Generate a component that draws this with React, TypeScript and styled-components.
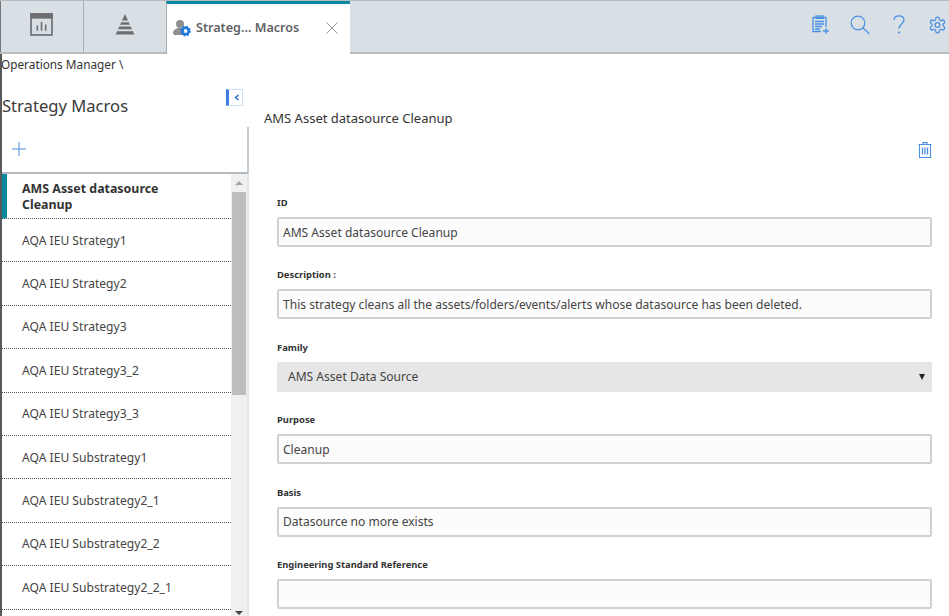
import React from "react";
import styled, { createGlobalStyle } from "styled-components";

const Global = createGlobalStyle`
  html, body { margin: 0; padding: 0; background: #fff; }
  body { font-family: "Noto Sans", "Open Sans", sans-serif; color: #333; }
  * { box-sizing: border-box; }
`;

const Page = styled.div`
  width: 949px; height: 616px; overflow: hidden; display: flex; flex-direction: column;
  background: #fff;
`;
const TabBar = styled.div`
  height: 54px; flex: none; display: flex; align-items: stretch;
  background: #d9e0e5; border-top: 1px solid #b9bcbe; border-bottom: 2px solid #b9bcbe;
`;
const IconTab = styled.div`
  width: 83px; display: flex; align-items: center; justify-content: center; padding-bottom: 3px;
  border-left: 1px solid #a9adb0;
  &:first-child { border-left: 1px solid #777; padding: 0 2px 5px 0; }
`;
const ActiveTab = styled.div`
  width: 184px; margin-bottom: -2px; display: flex; align-items: center;
  background: #fff; border-top: 3px solid #0b87a0; border-left: 1px solid #a9adb0;
  padding: 0 12px 3px 5px;
`;
const TabTitle = styled.span`
  font-size: 12.6px; font-weight: 600; color: #5f6264; margin-left: 4px; flex: 1; white-space: nowrap;
`;
const TabTools = styled.div`
  margin-left: auto; display: flex; align-items: center; gap: 23px; padding: 0 2px 3px 0;
  & > svg:first-child { margin-right: -3px; }
`;
const Crumb = styled.div`
  height: 22px; font-size: 11.8px; line-height: 21px; padding-left: 1px; color: #333; flex: none;
`;
const Body = styled.div`
  flex: 1; display: flex; min-height: 0; border-left: 2px solid #58595b; margin-top: -22px; padding-top: 22px;
`;
const Sidebar = styled.aside`
  width: 247px; flex: none; display: flex; flex-direction: column;
`;
const SideHead = styled.div`
  height: 51px; flex: none; display: flex; justify-content: space-between; padding: 13px 6px 0 0;
`;
const SideTitle = styled.h2`
  margin: 6px 0 0; font-size: 16.6px; font-weight: 400; line-height: 22px; color: #3a3a3a;
`;
const Collapse = styled.button`
  width: 17px; height: 17px; padding: 0 0 0 3px; background: #fff; display: flex; align-items: center; justify-content: center;
  border: 1px solid #cfe0f5; border-left: 3px solid #3d7fe0;
`;
const AddBar = styled.div`
  height: 47px; flex: none; display: flex; align-items: center; padding: 0 0 2px 10px;
  border-right: 2px solid #c5ced6; border-bottom: 2px solid #b4bac0;
`;
const ListWrap = styled.div`
  flex: 1; display: flex; min-height: 0; border-right: 2px solid #dfe6ec;
`;
const List = styled.ul`
  flex: 1; margin: 0; padding: 0; list-style: none; overflow: hidden;
`;
const Row = styled.li<{ $active?: boolean }>`
  height: 43.4px; display: flex; align-items: center; padding: 1px 10px 0 20px;
  border-bottom: 1px dotted #555; font-size: 12.1px; line-height: 16px; color: #444;
  ${p => p.$active ? "border-left: 5px solid #0b87a0; font-weight: 700; font-size: 12.4px; color: #333; padding: 1px 50px 0 15px; height: 45px;" : ""}
`;
const Scroll = styled.div`
  width: 16px; flex: none; background: #f0f0f0; display: flex; flex-direction: column; align-items: center; position: relative;
`;
const Thumb = styled.div`
  width: 14px; height: 203px; background: #bdbdbd; margin-top: 18px;
`;
const ArrowUp = styled.span`
  position: absolute; top: 7px; left: 4px; width: 0; height: 0;
  border-left: 4px solid transparent; border-right: 4px solid transparent; border-bottom: 4px solid #a3a3a3;
`;
const ArrowDown = styled.span`
  position: absolute; bottom: 1px; left: 4px; width: 0; height: 0;
  border-left: 4px solid transparent; border-right: 4px solid transparent; border-top: 4px solid #444;
`;
const Main = styled.main`
  flex: 1; min-width: 0; padding: 33px 17px 0 15px;
`;
const MainTitle = styled.h3`
  margin: 0; font-size: 13px; font-weight: 400; line-height: 18px; color: #333;
`;
const Actions = styled.div`
  display: flex; justify-content: flex-end; height: 40px; padding-top: 15px;
`;
const Form = styled.div`
  display: flex; flex-direction: column; gap: 21.4px; padding: 29px 0 0 13px;
`;
const Field = styled.div`
  display: flex; flex-direction: column; height: 51px;
`;
const Label = styled.label`
  font-size: 9.4px; font-weight: 700; line-height: 14px; height: 21px; color: #333;
`;
const Input = styled.div`
  height: 30px; flex: none; padding: 0 4px; display: flex; align-items: center; background: #fcfcfc;
  border: 2px solid #cdd2d2; border-radius: 2px; font-size: 12.05px; color: #444; white-space: nowrap;
`;
const SelectBox = styled(Input)`
  background: #e6e6e6; border-color: #dfe5e8; padding: 0 5px 0 9px; justify-content: space-between;
`;
const Caret = styled.span`
  width: 0; height: 0; border-left: 3.5px solid transparent; border-right: 3.5px solid transparent; border-top: 6px solid #222;
`;

const Blue = "#4a90e2";

const ReportIcon = () => (
  <svg width="23" height="23" viewBox="0 0 22 22" fill="none" stroke="#6d6e70" strokeWidth="1.6">
    <rect x="1" y="1" width="20" height="20" />
    <rect x="1" y="1" width="20" height="3.6" fill="#6d6e70" />
    <path d="M7 17v-5M11 17V8.5M15 17v-6" strokeWidth="1.5" />
  </svg>
);
const PyramidIcon = () => (
  <svg width="24" height="24" viewBox="0 0 24 24" fill="#6d6e70">
    <path d="M12 1l3 6.5H9z" />
    <path d="M8.3 9.2h7.4l1.2 2.6H7.1z" />
    <path d="M6.3 13.6h11.4l1.3 2.7H5z" />
    <path d="M4.2 18.2h15.6l1.4 2.8v.6H2.8V21z" />
  </svg>
);
const MacroIcon = () => (
  <svg width="20" height="20" viewBox="0 0 20 20">
    <circle cx="8" cy="6" r="4" fill="#8e9092" />
    <path d="M1 15c0-3 3-5 7-5s5 2 4 7H2z" fill="#8e9092" />
    <circle cx="13.5" cy="13" r="3.2" fill="none" stroke="#1f78e0" strokeWidth="2.6" />
    <circle cx="13.5" cy="13" r="4.6" fill="none" stroke="#1f78e0" strokeWidth="1.6" strokeDasharray="1.8 1.8" />
  </svg>
);
const CloseIcon = () => (
  <svg width="12" height="12" viewBox="0 0 12 12" stroke="#9a9a9a" strokeWidth="1" fill="none">
    <path d="M.5.5l11 11M11.500.5l-11 11" />
  </svg>
);
const ClipboardPlus = () => (
  <svg width="18" height="20" viewBox="0 0 18 20" fill="none" stroke={Blue} strokeWidth="1.3">
    <path d="M14 12V2.500H1v14h8" />
    <rect x="4" y="1" width="7" height="2.400" />
    <path d="M3 6.500h9M3 9h9M3 11.500h7M3 14h5" />
    <path d="M14 13v6M11 16h6" />
  </svg>
);
const SearchIcon = () => (
  <svg width="20" height="20" viewBox="0 0 20 20" fill="none" stroke={Blue} strokeWidth="1.2">
    <circle cx="8" cy="8" r="6.800" />
    <path d="M12.800 12.800l6.600 6.200" />
  </svg>
);
const HelpIcon = () => (
  <svg width="12" height="20" viewBox="0 0 12 20" fill="none" stroke={Blue} strokeWidth="1.3">
    <path d="M1 5c0-3 2.200-4.200 5-4.200S11 2.300 11 5c0 3.500-5 4-5 8.500" />
    <circle cx="6" cy="17.500" r="1.100" fill={Blue} stroke="none" />
  </svg>
);
const GearIcon = () => (
  <svg width="19" height="20" viewBox="0 0 24 24" fill="none" stroke={Blue} strokeWidth="1.600" strokeLinejoin="round">
    <path d="M12.220 2h-.440a2 2 0 0 0-2 2v.180a2 2 0 0 1-1 1.730l-.430.250a2 2 0 0 1-2 0l-.150-.080a2 2 0 0 0-2.730.730l-.220.380a2 2 0 0 0 .730 2.730l.150.100a2 2 0 0 1 1 1.720v.510a2 2 0 0 1-1 1.740l-.150.090a2 2 0 0 0-.730 2.730l.220.380a2 2 0 0 0 2.730.730l.150-.080a2 2 0 0 1 2 0l.430.250a2 2 0 0 1 1 1.730V20a2 2 0 0 0 2 2h.440a2 2 0 0 0 2-2v-.180a2 2 0 0 1 1-1.730l.430-.250a2 2 0 0 1 2 0l.150.080a2 2 0 0 0 2.730-.730l.220-.390a2 2 0 0 0-.730-2.730l-.150-.080a2 2 0 0 1-1-1.740v-.500a2 2 0 0 1 1-1.740l.150-.090a2 2 0 0 0 .730-2.730l-.220-.380a2 2 0 0 0-2.730-.730l-.150.080a2 2 0 0 1-2 0l-.430-.250a2 2 0 0 1-1-1.730V4a2 2 0 0 0-2-2z" />
    <circle cx="12" cy="12" r="3" />
  </svg>
);
const TrashIcon = () => (
  <svg width="14" height="16" viewBox="0 0 14 16" fill="none" stroke={Blue} strokeWidth="1.100">
    <path d="M.5 2.500h13M1.500 2.500V15.500h11V2.500" />
    <path d="M5 2.500V.6h4v1.900" />
    <path d="M4.500 5.500v7M7 5.500v7M9.500 5.500v7" strokeWidth="1.300" />
  </svg>
);
const PlusIcon = () => (
  <svg width="14" height="14" viewBox="0 0 14 14" stroke={Blue} strokeWidth="1" fill="none">
    <path d="M7 0v14M0 7h14" />
  </svg>
);

const items = ["AQA IEU Strategy1","AQA IEU Strategy2","AQA IEU Strategy3","AQA IEU Strategy3_2","AQA IEU Strategy3_3","AQA IEU Substrategy1","AQA IEU Substrategy2_1","AQA IEU Substrategy2_2","AQA IEU Substrategy2_2_1"];
const fields = [
  { label: "ID", value: "AMS Asset datasource Cleanup" },
  { label: "Description :", value: "This strategy cleans all the assets/folders/events/alerts whose datasource has been deleted." },
  { label: "Family", value: "AMS Asset Data Source", select: true },
  { label: "Purpose", value: "Cleanup" },
  { label: "Basis", value: "Datasource no more exists" },
  { label: "Engineering Standard Reference", value: "" },
];

export default function App() {
  return (
    <Page>
      <Global />
      <TabBar>
        <IconTab><ReportIcon /></IconTab>
        <IconTab><PyramidIcon /></IconTab>
        <ActiveTab>
          <MacroIcon />
          <TabTitle>Strateg... Macros</TabTitle>
          <CloseIcon />
        </ActiveTab>
        <TabTools>
          <ClipboardPlus /><SearchIcon /><HelpIcon /><GearIcon />
        </TabTools>
      </TabBar>
      <Crumb>Operations Manager \</Crumb>
      <Body>
        <Sidebar>
          <SideHead>
            <SideTitle>Strategy Macros</SideTitle>
            <Collapse>
              <svg width="6" height="7" viewBox="0 0 6 7" fill="none" stroke="#2a6fd6" strokeWidth="1.500"><path d="M4.500 1L1.500 3.500l3 2.500" /></svg>
            </Collapse>
          </SideHead>
          <AddBar><PlusIcon /></AddBar>
          <ListWrap>
            <List>
              <Row $active>AMS Asset datasource Cleanup</Row>
              {items.map(i => <Row key={i}>{i}</Row>)}
            </List>
            <Scroll><ArrowUp /><Thumb /><ArrowDown /></Scroll>
          </ListWrap>
        </Sidebar>
        <Main>
          <MainTitle>AMS Asset datasource Cleanup</MainTitle>
          <Actions><TrashIcon /></Actions>
          <Form>
            {fields.map(f => (
              <Field key={f.label}>
                <Label>{f.label}</Label>
                {f.select
                  ? <SelectBox>{f.value}<Caret /></SelectBox>
                  : <Input>{f.value}</Input>}
              </Field>
            ))}
          </Form>
        </Main>
      </Body>
    </Page>
  );
}
